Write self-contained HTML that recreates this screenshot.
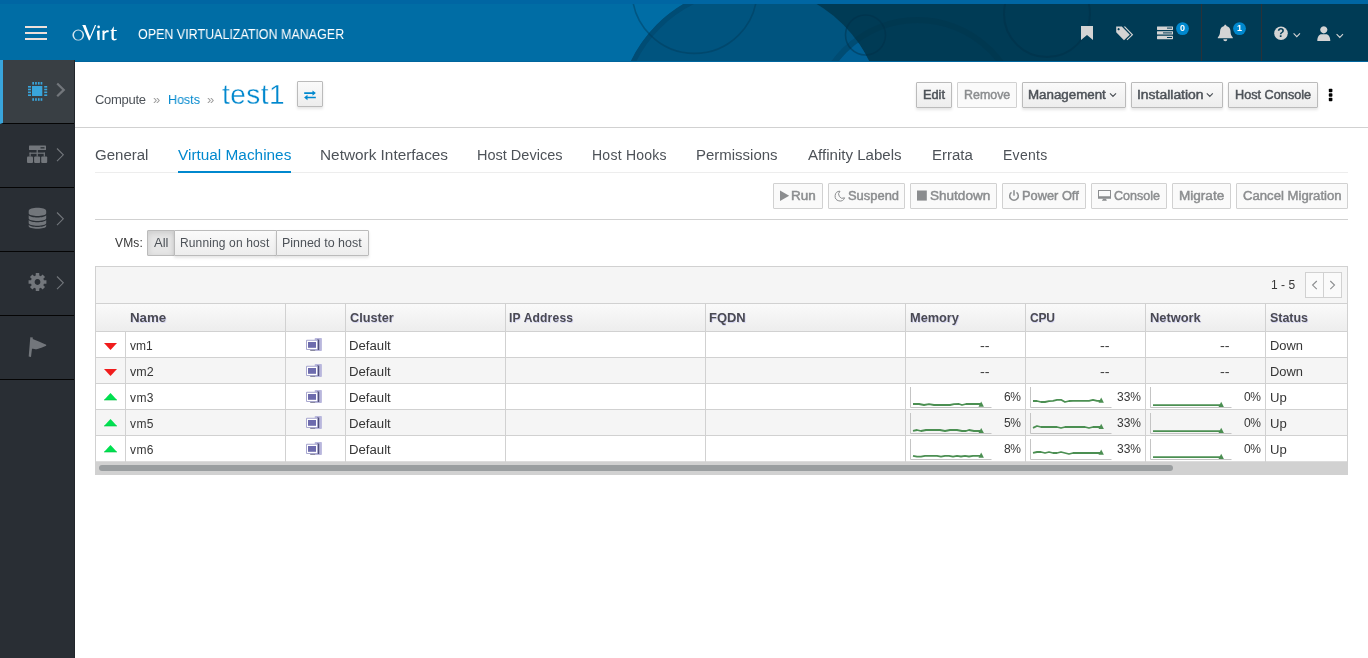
<!DOCTYPE html>
<html><head><meta charset="utf-8"><title>oVirt Open Virtualization Manager</title>
<style>
*{box-sizing:border-box;margin:0;padding:0}
html,body{width:1368px;height:658px;overflow:hidden;background:#fff;font-family:"Liberation Sans",sans-serif;font-size:12px;color:#363636}
.abs{position:absolute}
#hdr{position:absolute;left:0;top:0;width:1368px;height:62px;background:#006da5;overflow:hidden}
#hdr .top{position:absolute;left:0;top:0;width:1368px;height:4px;background:#0066a3}
#side{position:absolute;left:0;top:60px;width:75px;height:598px;background:#292e34;border-right:1px solid #22262b}
.sitem{position:absolute;left:0;width:74px;height:64px;border-bottom:1px solid #050505}
.sitem.act{background:#393f44;border-left:3px solid #39a5dc}
.t{position:absolute;white-space:nowrap;line-height:1;will-change:transform}
.btn{position:absolute;height:26px;border:1px solid #bbb;border-radius:1px;background:linear-gradient(#fafafa,#ededed);box-shadow:0 2px 3px rgba(3,3,3,.1)}
.btn.dis{background:#fafafa;border-color:#d1d1d1;box-shadow:none}
.ln{position:absolute;background:#d1d1d1}
</style></head><body>
<div id="hdr"><div class="top"></div>
<svg class="abs" style="left:0;top:0" width="1368" height="62" viewBox="0 0 1368 62">
<defs><clipPath id="hc"><rect x="0" y="4" width="1368" height="57.5"/></clipPath>
<clipPath id="d1"><circle cx="750" cy="118" r="132"/></clipPath>
<clipPath id="lh"><rect x="600" y="0" width="150" height="62"/></clipPath></defs>
<g clip-path="url(#hc)">
<rect x="750" y="0" width="618" height="62" fill="#003b55"/>
<circle cx="750" cy="118" r="132" fill="#00547f"/>
<g clip-path="url(#lh)"><circle cx="750" cy="118" r="129.5" fill="none" stroke="#004c74" stroke-width="5"/></g>
<g clip-path="url(#d1)"><circle cx="917.5" cy="123" r="106" fill="#005f94"/></g>
<circle cx="917.5" cy="123" r="103" fill="none" stroke="#00354c" stroke-opacity=".45" stroke-width="6"/>
<circle cx="694.5" cy="-9" r="62.4" fill="none" stroke="#003a58" stroke-opacity=".45" stroke-width="1.6"/>
<circle cx="865.5" cy="35" r="20" fill="none" stroke="#002f46" stroke-opacity=".45" stroke-width="1.6"/>
<circle cx="1047" cy="14" r="43" fill="none" stroke="#00324a" stroke-opacity=".6" stroke-width="2"/>
</g>
<rect x="0" y="61" width="1368" height="1" fill="#00659d"/>
</svg>
<div class="abs" style="left:25px;top:26px;width:22px;height:2px;background:#ede0da"></div>
<div class="abs" style="left:25px;top:32px;width:22px;height:2px;background:#ede0da"></div>
<div class="abs" style="left:25px;top:38px;width:22px;height:2px;background:#ede0da"></div>
<svg class="abs" style="left:70px;top:20px" width="50" height="24" viewBox="70 20 50 24">
<path fill="#d3e5ef" fill-rule="evenodd" d="M72.400 35.100a5.850 5.500 0 1 0 11.700 0a5.850 5.500 0 1 0-11.700 0zM74 35.100a4.250 4.700 0 1 0 8.500 0a4.250 4.700 0 1 0-8.500 0z"/>
<g fill="#fff">
<path d="M81.800 25.100h3.700l4.500 11.700 4.900-11.700h1.300l-6.500 15.200h-.9l-6.200-14.700z"/>
<circle cx="98.600" cy="26.900" r="1.300"/>
<path d="M96.900 31l2.700-.7v9.800h-2z"/>
<path d="M101.800 31l2.700-.7v1.800c.9-1.400 2.400-2.100 4.200-1.700v1.900c-1.700-.4-3.200.2-4.200 1.800v6h-2v-8.700z"/>
<path d="M111.500 29.900l2.300-3.600v3.600h3v1.200h-3v6.600c0 1.300 1.300 1.700 2.800.9v1.100c-2.500 1.600-5.100.7-5.100-1.700v-6.900h-1.100v-.6z"/>
</g>
</svg>
<div class="t" style="left:137.74px;top:27.00px;font-size:14px;color:#fff;transform:scaleX(0.8913);transform-origin:0 0;">OPEN VIRTUALIZATION MANAGER</div>
<svg class="abs" style="left:1070px;top:14px" width="290" height="40" viewBox="1070 14 290 40">
<g fill="#d4d4d4">
<path d="M1081 26h12v14l-6-5-6 5z"/>
<path d="M1116.200 26.500h5.600l8 8.200-5.800 5.600-7.800-8zM1118.600 28.100a1.100 1.100 0 1 0 .01 0z" fill-rule="evenodd"/>
<path d="M1123.600 26.500h1.600l8 8.200-5.800 5.600-.8-.8 5-4.800z"/>
<rect x="1157" y="26.400" width="16" height="3.600" rx=".4"/><rect x="1157" y="31.200" width="16" height="3.400" rx=".4"/><rect x="1157" y="35.800" width="16" height="3.400" rx=".4"/>
</g>
<g fill="#003b55"><rect x="1167" y="27.600" width="5" height="1"/><rect x="1163" y="32.400" width="9" height="1"/><rect x="1167" y="37" width="5" height="1"/></g>
<circle cx="1182.500" cy="28.600" r="6.400" fill="#0088ce"/>
<circle cx="1239.500" cy="28.600" r="6.400" fill="#0088ce"/>
<path fill="#d4d4d4" d="M1225.300 24.800c.7 0 1.100.5 1.100 1.100 2.600.5 4.100 2.700 4.100 5.200 0 3.600 1 5.200 2.300 6.300v.9h-15v-.9c1.300-1.100 2.300-2.700 2.300-6.300 0-2.500 1.500-4.700 4.100-5.200 0-.6.400-1.100 1.100-1.100zM1223.300 39.200h4a2 2 0 0 1-4 0z"/>
<circle cx="1281" cy="33.200" r="6.800" fill="#d4d4d4"/>
<path fill="#d4d4d4" d="M1323.800 26.200a3.600 3.600 0 1 1-.01 0zM1317.300 41c0-4.600 2-6.800 4.200-6.800h4.600c2.200 0 4.200 2.200 4.200 6.800z"/>
<path d="M1293.600 33.400l3.200 3.200 3.200-3.200M1336.600 34.200l3.200 3.200 3.200-3.200" fill="none" stroke="#d4d4d4" stroke-width="1.100"/>
</svg>
<div class="t" style="left:1179px;top:24px;width:7px;text-align:center;font-size:9px;font-weight:bold;color:#fff">0</div>
<div class="t" style="left:1236px;top:24px;width:7px;text-align:center;font-size:9px;font-weight:bold;color:#fff">1</div>
<div class="t" style="left:1277px;top:27px;width:8px;text-align:center;font-size:12px;font-weight:bold;color:#003b55">?</div>
<div class="abs" style="left:1201px;top:4px;width:1px;height:57px;background:#2a3138"></div><div class="abs" style="left:1261px;top:4px;width:1px;height:57px;background:#2a3138"></div>
</div>
<div id="side">
<div class="sitem act" style="top:0px"></div>
<div class="sitem" style="top:64px"></div>
<div class="sitem" style="top:128px"></div>
<div class="sitem" style="top:192px"></div>
<div class="sitem" style="top:256px"></div>
<svg class="abs" style="left:0;top:0" width="75" height="330" viewBox="0 60 75 330">
<g fill="#39a5dc">
<rect x="32" y="86" width="10.300" height="10"/>
<rect x="32.3" y="82" width="1.700" height="2.600"/><rect x="32.3" y="98.200" width="1.700" height="2.600"/><rect x="35.1" y="82" width="1.700" height="2.600"/><rect x="35.1" y="98.200" width="1.700" height="2.600"/><rect x="37.9" y="82" width="1.700" height="2.600"/><rect x="37.9" y="98.200" width="1.700" height="2.600"/><rect x="40.6" y="82" width="1.700" height="2.600"/><rect x="40.6" y="98.200" width="1.700" height="2.600"/><rect x="28" y="86" width="3" height="1.600"/><rect x="44.200" y="86" width="3" height="1.600"/><rect x="28" y="88.7" width="3" height="1.600"/><rect x="44.200" y="88.7" width="3" height="1.600"/><rect x="28" y="91.5" width="3" height="1.600"/><rect x="44.200" y="91.5" width="3" height="1.600"/><rect x="28" y="94.4" width="3" height="1.600"/><rect x="44.200" y="94.4" width="3" height="1.600"/>
</g>
<path d="M57.200 83.500l6.600 6.400-6.600 6.400" fill="none" stroke="#72767b" stroke-width="2.200"/>
<g fill="none" stroke="#72767b" stroke-width="1.100"><path d="M57 148.500l6.300 6.300-6.300 6.300"/><path d="M57 212.500l6.300 6.300-6.300 6.300"/><path d="M57 276.500l6.300 6.300-6.300 6.300"/></g>
<g fill="#72767b">
<rect x="29" y="145.600" width="17" height="4.400" rx=".6"/>
<rect x="27" y="156.600" width="6" height="6.400" rx="1"/><rect x="34.100" y="156.600" width="6" height="6.400" rx="1"/><rect x="41.200" y="156.600" width="6" height="6.400" rx="1"/>
<rect x="36.600" y="150" width="1.200" height="6.600"/><rect x="29.500" y="152.600" width="15.400" height="1.200"/><rect x="29.500" y="152.600" width="1.200" height="4"/><rect x="43.700" y="152.600" width="1.200" height="4"/>
</g>
<rect x="40.500" y="147.200" width="4" height="1.300" fill="#292e34"/>
<g fill="#72767b">
<path d="M28.700 211c0-4.300 17.500-4.300 17.500 0v2.200c0 3.600-17.500 3.600-17.500 0z"/>
<path d="M28.700 215.200c2 3 15.500 3 17.500 0v3c0 3.600-17.500 3.600-17.500 0z"/>
<path d="M28.700 220c2 3 15.500 3 17.500 0v3c0 3.600-17.500 3.600-17.500 0z"/>
<path d="M28.700 224.800c2 3 15.500 3 17.500 0v1.200c0 3.600-17.500 3.600-17.500 0z"/>
</g>
<path fill="#72767b" fill-rule="evenodd" d="M35.71 275.54L35.78 273.06L39.22 273.06L39.29 275.54L40.80 276.17L42.60 274.47L45.03 276.90L43.33 278.70L43.96 280.21L46.44 280.28L46.44 283.72L43.96 283.79L43.33 285.30L45.03 287.10L42.60 289.53L40.80 287.83L39.29 288.46L39.22 290.94L35.78 290.94L35.71 288.46L34.20 287.83L32.40 289.53L29.97 287.10L31.67 285.30L31.04 283.79L28.56 283.72L28.56 280.28L31.04 280.21L31.67 278.70L29.97 276.90L32.40 274.47L34.20 276.17zM37.5 279.1a2.9 2.9 0 1 0 .01 0z"/>
<path fill="#72767b" d="M30.300 337.200l2.600.3-.2 1.600c4.500 1.800 9 3.600 13.500 5.700v.9c-3.200 1.300-6.400 2.700-9.600 3.600-1.400.1-2.800-.5-4.600-.6l-1 8.200-2.300-.3z"/>
</svg>
</div>
<div class="t" style="left:94.78px;top:93.00px;font-size:13px;color:#4d5258;letter-spacing:-0.287px;">Compute</div>
<div class="t" style="left:152.52px;top:93.00px;font-size:13px;color:#9c9c9c;transform:scaleX(0.9600);transform-origin:0 0;">»</div>
<div class="t" style="left:167.54px;top:93.00px;font-size:13px;color:#0088ce;transform:scaleX(0.9631);transform-origin:0 0;">Hosts</div>
<div class="t" style="left:206.52px;top:93.00px;font-size:13px;color:#9c9c9c;transform:scaleX(0.9600);transform-origin:0 0;">»</div>
<div class="t" style="left:222.03px;top:80.50px;font-size:28px;color:#0088ce;letter-spacing:0.475px;-webkit-text-stroke:.35px #fff;">test1</div>
<div class="btn" style="left:297px;top:81px;width:26px"></div>
<svg class="abs" style="left:303px;top:89px" width="14" height="12" viewBox="303 89 14 12"><g fill="#0088ce"><path d="M304.200 92.300h8.300v-1.900l3.400 2.700-3.400 2.700v-1.900h-8.300z"/><path d="M315.800 96.700h-8.300v-1.900l-3.400 2.700 3.400 2.700v-1.900h8.300z"/></g></svg>
<div class="ln" style="left:75px;top:127px;width:1293px;height:1px"></div>
<div class="btn" style="left:916px;top:82px;width:36px"></div>
<div class="t" style="left:922.57px;top:89.00px;font-size:12px;color:#4d5258;transform:scaleX(1.0633);transform-origin:0 0;-webkit-text-stroke:.45px #4d5258;">Edit</div>
<div class="btn dis" style="left:957px;top:82px;width:60px"></div>
<div class="t" style="left:963.79px;top:89.00px;font-size:12px;color:#8b8d8f;transform:scaleX(1.0352);transform-origin:0 0;-webkit-text-stroke:.45px #8b8d8f;">Remove</div>
<div class="btn" style="left:1022px;top:82px;width:104px"></div>
<div class="t" style="left:1028.43px;top:89.00px;font-size:12px;color:#4d5258;transform:scaleX(1.1110);transform-origin:0 0;-webkit-text-stroke:.45px #4d5258;">Management</div>
<div class="btn" style="left:1131px;top:82px;width:92px"></div>
<div class="t" style="left:1137.34px;top:89.00px;font-size:12px;color:#4d5258;transform:scaleX(1.1605);transform-origin:0 0;-webkit-text-stroke:.45px #4d5258;">Installation</div>
<div class="btn" style="left:1228px;top:82px;width:90px"></div>
<div class="t" style="left:1234.77px;top:89.00px;font-size:12px;color:#4d5258;transform:scaleX(1.0572);transform-origin:0 0;-webkit-text-stroke:.45px #4d5258;">Host Console</div>
<svg class="abs" style="left:1108px;top:90px" width="110" height="10" viewBox="1108 90 110 10"><path d="M1110 93.400l3 3 3-3M1206.800 93.400l3 3 3-3" fill="none" stroke="#4d5258" stroke-width="1.200"/></svg>
<svg class="abs" style="left:1327px;top:87px" width="8" height="16" viewBox="1327 87 8 16"><g fill="#030303"><rect x="1328.800" y="88.800" width="3.600" height="3.400" rx=".8"/><rect x="1328.800" y="93.300" width="3.600" height="3.400" rx=".8"/><rect x="1328.800" y="97.800" width="3.600" height="3.400" rx=".8"/></g></svg>
<div class="t" style="left:94.73px;top:148.00px;font-size:14px;color:#4d5258;transform:scaleX(1.0729);transform-origin:0 0;">General</div>
<div class="t" style="left:177.90px;top:148.00px;font-size:14px;color:#0088ce;transform:scaleX(1.0978);transform-origin:0 0;">Virtual Machines</div>
<div class="t" style="left:320.07px;top:148.00px;font-size:14px;color:#4d5258;transform:scaleX(1.0971);transform-origin:0 0;">Network Interfaces</div>
<div class="t" style="left:477.23px;top:148.00px;font-size:14px;color:#4d5258;transform:scaleX(1.0362);transform-origin:0 0;">Host Devices</div>
<div class="t" style="left:592.27px;top:148.00px;font-size:14px;color:#4d5258;letter-spacing:0.250px;">Host Hooks</div>
<div class="t" style="left:696.30px;top:148.00px;font-size:14px;color:#4d5258;transform:scaleX(1.0693);transform-origin:0 0;">Permissions</div>
<div class="t" style="left:808.40px;top:148.00px;font-size:14px;color:#4d5258;transform:scaleX(1.0767);transform-origin:0 0;">Affinity Labels</div>
<div class="t" style="left:931.59px;top:148.00px;font-size:14px;color:#4d5258;transform:scaleX(1.0721);transform-origin:0 0;">Errata</div>
<div class="t" style="left:1002.58px;top:148.00px;font-size:14px;color:#4d5258;letter-spacing:0.275px;">Events</div>
<div class="ln" style="left:95px;top:172px;width:1253px;height:1px;background:#ededed"></div>
<div class="abs" style="left:178px;top:171px;width:113px;height:2px;background:#0088ce"></div>
<div class="btn dis" style="left:773px;top:183px;width:50px"></div>
<div class="t" style="left:791.42px;top:190.00px;font-size:12px;color:#8b8d8f;transform:scaleX(1.1220);transform-origin:0 0;-webkit-text-stroke:.45px #8b8d8f;">Run</div>
<div class="btn dis" style="left:828px;top:183px;width:77px"></div>
<div class="t" style="left:847.76px;top:190.00px;font-size:12px;color:#8b8d8f;transform:scaleX(1.0768);transform-origin:0 0;-webkit-text-stroke:.45px #8b8d8f;">Suspend</div>
<div class="btn dis" style="left:910px;top:183px;width:87px"></div>
<div class="t" style="left:929.54px;top:190.00px;font-size:12px;color:#8b8d8f;transform:scaleX(1.1292);transform-origin:0 0;-webkit-text-stroke:.45px #8b8d8f;">Shutdown</div>
<div class="btn dis" style="left:1002px;top:183px;width:84px"></div>
<div class="t" style="left:1021.77px;top:190.00px;font-size:12px;color:#8b8d8f;transform:scaleX(1.0679);transform-origin:0 0;-webkit-text-stroke:.45px #8b8d8f;">Power Off</div>
<div class="btn dis" style="left:1091px;top:183px;width:76px"></div>
<div class="t" style="left:1114.08px;top:190.00px;font-size:12px;color:#8b8d8f;transform:scaleX(1.0435);transform-origin:0 0;-webkit-text-stroke:.45px #8b8d8f;">Console</div>
<div class="btn dis" style="left:1172px;top:183px;width:59px"></div>
<div class="t" style="left:1178.61px;top:190.00px;font-size:12px;color:#8b8d8f;transform:scaleX(1.1303);transform-origin:0 0;-webkit-text-stroke:.45px #8b8d8f;">Migrate</div>
<div class="btn dis" style="left:1236px;top:183px;width:112px"></div>
<div class="t" style="left:1242.65px;top:190.00px;font-size:12px;color:#8b8d8f;transform:scaleX(1.0948);transform-origin:0 0;-webkit-text-stroke:.45px #8b8d8f;">Cancel Migration</div>
<svg class="abs" style="left:778px;top:188px" width="336" height="16" viewBox="778 188 336 16">
<path d="M780 190.500l9.200 5.300-9.200 5.300z" fill="#8b8d8f"/>
<path d="M840 191.200A4.900 4.900 0 1 0 844.600 197.800A4.050 4.050 0 0 1 840 191.200z" fill="none" stroke="#8b8d8f" stroke-width="1" stroke-linejoin="round"/>
<rect x="917" y="190.500" width="9.800" height="10.100" fill="#8b8d8f"/>
<path d="M1016.470 192.480A4.300 4.300 0 1 1 1011.530 192.480" fill="none" stroke="#8b8d8f" stroke-width="1.500"/><rect x="1013.250" y="190.200" width="1.500" height="5.500" fill="#8b8d8f"/>
<path d="M1098 190h13v8.800h-13zM1099 191.100v5.100h11v-5.100z" fill="#8b8d8f" fill-rule="evenodd"/><path d="M1102.700 198.800h3.600v1.200h.4v.8h-4.600v-.8h.6z" fill="#8b8d8f"/>
</svg>
<div class="ln" style="left:95px;top:219px;width:1253px;height:1px"></div>
<div class="t" style="left:114.90px;top:237.00px;font-size:12px;color:#363636;letter-spacing:0.183px;">VMs:</div>
<div class="btn" style="left:147px;top:230px;width:28px;background:#e6e6e6;box-shadow:inset 0 2px 6px rgba(3,3,3,.12)"></div>
<div class="btn" style="left:174px;top:230px;width:103px"></div>
<div class="btn" style="left:276px;top:230px;width:93px"></div>
<div class="t" style="left:154.10px;top:237.00px;font-size:12px;color:#4d5258;transform:scaleX(1.0880);transform-origin:0 0;">All</div>
<div class="t" style="left:180.43px;top:237.00px;font-size:12px;color:#4d5258;letter-spacing:0.136px;">Running on host</div>
<div class="t" style="left:282.39px;top:237.00px;font-size:12px;color:#4d5258;transform:scaleX(1.0376);transform-origin:0 0;">Pinned to host</div>
<div class="abs" style="left:95px;top:266px;width:1253px;height:209px;border:1px solid #d1d1d1;background:#f5f5f5"></div>
<div class="abs" style="left:96px;top:304px;width:1251px;height:27px;background:linear-gradient(#fafafa,#ededed)"></div>
<div class="ln" style="left:96px;top:303px;width:1251px;height:1px"></div>
<div class="abs" style="left:96px;top:332px;width:1251px;height:26px;background:#fff;border-bottom:1px solid #d1d1d1"></div>
<div class="abs" style="left:96px;top:358px;width:1251px;height:26px;background:#f5f5f5;border-bottom:1px solid #d1d1d1"></div>
<div class="abs" style="left:96px;top:384px;width:1251px;height:26px;background:#fff;border-bottom:1px solid #d1d1d1"></div>
<div class="abs" style="left:96px;top:410px;width:1251px;height:26px;background:#f5f5f5;border-bottom:1px solid #d1d1d1"></div>
<div class="abs" style="left:96px;top:436px;width:1251px;height:26px;background:#fff;border-bottom:1px solid #dcdcdc"></div>
<div class="ln" style="left:96px;top:331px;width:1251px;height:1px"></div>
<div class="ln" style="left:285px;top:304px;width:1px;height:158px"></div>
<div class="ln" style="left:345px;top:304px;width:1px;height:158px"></div>
<div class="ln" style="left:505px;top:304px;width:1px;height:158px"></div>
<div class="ln" style="left:705px;top:304px;width:1px;height:158px"></div>
<div class="ln" style="left:905px;top:304px;width:1px;height:158px"></div>
<div class="ln" style="left:1025px;top:304px;width:1px;height:158px"></div>
<div class="ln" style="left:1145px;top:304px;width:1px;height:158px"></div>
<div class="ln" style="left:1265px;top:304px;width:1px;height:158px"></div>
<div class="ln" style="left:125px;top:332px;width:1px;height:130px"></div>
<div class="abs" style="left:96px;top:462px;width:1251px;height:12px;background:#d1d1d1"></div>
<div class="abs" style="left:99px;top:465px;width:1074px;height:6px;border-radius:3px;background:#9a9ea0"></div>
<div class="t" style="left:1270.83px;top:279.00px;font-size:12px;color:#363636;letter-spacing:0.037px;">1 - 5</div>
<div class="abs" style="left:1305px;top:272px;width:37px;height:26px;border:1px solid #d1d1d1;background:#fafafa"></div><div class="ln" style="left:1323px;top:273px;width:1px;height:24px"></div>
<svg class="abs" style="left:1308px;top:278px" width="32" height="14" viewBox="1308 278 32 14"><path d="M1316.800 281l-4.200 4.100 4.200 4.100M1330.300 281l4.200 4.100-4.200 4.100" fill="none" stroke="#8b8d8f" stroke-width="1.100"/></svg>
<div class="t" style="left:129.77px;top:312.00px;font-size:12px;color:#4a4a52;transform:scaleX(1.1067);transform-origin:0 0;font-weight:bold;text-shadow:.6px .6px 0 #d4d4f2;">Name</div>
<div class="t" style="left:349.60px;top:312.00px;font-size:12px;color:#4a4a52;transform:scaleX(1.0552);transform-origin:0 0;font-weight:bold;text-shadow:.6px .6px 0 #d4d4f2;">Cluster</div>
<div class="t" style="left:509.25px;top:312.00px;font-size:12px;color:#4a4a52;letter-spacing:0.214px;font-weight:bold;text-shadow:.6px .6px 0 #d4d4f2;">IP Address</div>
<div class="t" style="left:709.49px;top:312.00px;font-size:12px;color:#4a4a52;transform:scaleX(1.0769);transform-origin:0 0;font-weight:bold;text-shadow:.6px .6px 0 #d4d4f2;">FQDN</div>
<div class="t" style="left:909.70px;top:312.00px;font-size:12px;color:#4a4a52;transform:scaleX(1.0630);transform-origin:0 0;font-weight:bold;text-shadow:.6px .6px 0 #d4d4f2;">Memory</div>
<div class="t" style="left:1030.33px;top:312.00px;font-size:12px;color:#4a4a52;letter-spacing:-0.225px;font-weight:bold;text-shadow:.6px .6px 0 #d4d4f2;">CPU</div>
<div class="t" style="left:1149.70px;top:312.00px;font-size:12px;color:#4a4a52;transform:scaleX(1.0724);transform-origin:0 0;font-weight:bold;text-shadow:.6px .6px 0 #d4d4f2;">Network</div>
<div class="t" style="left:1270.04px;top:312.00px;font-size:12px;color:#4a4a52;transform:scaleX(1.0361);transform-origin:0 0;font-weight:bold;text-shadow:.6px .6px 0 #d4d4f2;">Status</div>
<div class="t" style="left:130.10px;top:340.00px;font-size:12px;color:#363636;letter-spacing:-0.013px;">vm1</div>
<div class="t" style="left:349.04px;top:340.00px;font-size:12px;color:#363636;transform:scaleX(1.0990);transform-origin:0 0;">Default</div>
<svg class="abs" style="left:103px;top:342px" width="16" height="9" viewBox="0 0 16 9"><path d="M1 1.100h13l-6.500 6.900z" fill="#f01c1c"/></svg>
<div class="t" style="left:1269.76px;top:340.00px;font-size:12px;color:#363636;transform:scaleX(1.0747);transform-origin:0 0;">Down</div>
<div class="t" style="left:980.00px;top:340.00px;font-size:12px;color:#363636;transform:scaleX(1.2000);transform-origin:0 0;">--</div>
<div class="t" style="left:1100.00px;top:340.00px;font-size:12px;color:#363636;transform:scaleX(1.2000);transform-origin:0 0;">--</div>
<div class="t" style="left:1220.00px;top:340.00px;font-size:12px;color:#363636;transform:scaleX(1.2000);transform-origin:0 0;">--</div>
<svg class="abs" style="left:305px;top:337px" width="18" height="15" viewBox="305 337 18 15"><rect x="314.700" y="338" width="7.200" height="13" rx=".8" fill="#b9b7dd"/><rect x="317" y="339.500" width="2.200" height="10.500" fill="#50507a"/><rect x="306" y="339.800" width="12" height="10.200" rx="1" fill="#a9a8d0"/><rect x="307" y="340.800" width="10" height="8.200" fill="#fff"/><rect x="308" y="342" width="8" height="5.800" fill="#6d6bad"/><rect x="310.200" y="350" width="5" height="1" fill="#8a8aa0"/></svg>
<div class="t" style="left:130.10px;top:366.00px;font-size:12px;color:#363636;transform:scaleX(1.0395);transform-origin:0 0;">vm2</div>
<div class="t" style="left:349.04px;top:366.00px;font-size:12px;color:#363636;transform:scaleX(1.0990);transform-origin:0 0;">Default</div>
<svg class="abs" style="left:103px;top:368px" width="16" height="9" viewBox="0 0 16 9"><path d="M1 1.100h13l-6.500 6.900z" fill="#f01c1c"/></svg>
<div class="t" style="left:1269.76px;top:366.00px;font-size:12px;color:#363636;transform:scaleX(1.0747);transform-origin:0 0;">Down</div>
<div class="t" style="left:980.00px;top:366.00px;font-size:12px;color:#363636;transform:scaleX(1.2000);transform-origin:0 0;">--</div>
<div class="t" style="left:1100.00px;top:366.00px;font-size:12px;color:#363636;transform:scaleX(1.2000);transform-origin:0 0;">--</div>
<div class="t" style="left:1220.00px;top:366.00px;font-size:12px;color:#363636;transform:scaleX(1.2000);transform-origin:0 0;">--</div>
<svg class="abs" style="left:305px;top:363px" width="18" height="15" viewBox="305 337 18 15"><rect x="314.700" y="338" width="7.200" height="13" rx=".8" fill="#b9b7dd"/><rect x="317" y="339.500" width="2.200" height="10.500" fill="#50507a"/><rect x="306" y="339.800" width="12" height="10.200" rx="1" fill="#a9a8d0"/><rect x="307" y="340.800" width="10" height="8.200" fill="#fff"/><rect x="308" y="342" width="8" height="5.800" fill="#6d6bad"/><rect x="310.200" y="350" width="5" height="1" fill="#8a8aa0"/></svg>
<div class="t" style="left:130.10px;top:392.00px;font-size:12px;color:#363636;letter-spacing:0.375px;">vm3</div>
<div class="t" style="left:349.04px;top:392.00px;font-size:12px;color:#363636;transform:scaleX(1.0990);transform-origin:0 0;">Default</div>
<svg class="abs" style="left:103px;top:392px" width="16" height="9" viewBox="0 0 16 9"><path d="M1 8l6.500-7 6.500 7z" fill="#00e050"/><path d="M1 8h13" stroke="#00c040" stroke-width=".6"/></svg>
<div class="t" style="left:1269.74px;top:392.00px;font-size:12px;color:#363636;transform:scaleX(1.0929);transform-origin:0 0;">Up</div>
<svg class="abs" style="left:305px;top:389px" width="18" height="15" viewBox="305 337 18 15"><rect x="314.700" y="338" width="7.200" height="13" rx=".8" fill="#b9b7dd"/><rect x="317" y="339.500" width="2.200" height="10.500" fill="#50507a"/><rect x="306" y="339.800" width="12" height="10.200" rx="1" fill="#a9a8d0"/><rect x="307" y="340.800" width="10" height="8.200" fill="#fff"/><rect x="308" y="342" width="8" height="5.800" fill="#6d6bad"/><rect x="310.200" y="350" width="5" height="1" fill="#8a8aa0"/></svg>
<div class="t" style="left:130.10px;top:418.00px;font-size:12px;color:#363636;letter-spacing:0.375px;">vm5</div>
<div class="t" style="left:349.04px;top:418.00px;font-size:12px;color:#363636;transform:scaleX(1.0990);transform-origin:0 0;">Default</div>
<svg class="abs" style="left:103px;top:418px" width="16" height="9" viewBox="0 0 16 9"><path d="M1 8l6.500-7 6.500 7z" fill="#00e050"/><path d="M1 8h13" stroke="#00c040" stroke-width=".6"/></svg>
<div class="t" style="left:1269.74px;top:418.00px;font-size:12px;color:#363636;transform:scaleX(1.0929);transform-origin:0 0;">Up</div>
<svg class="abs" style="left:305px;top:415px" width="18" height="15" viewBox="305 337 18 15"><rect x="314.700" y="338" width="7.200" height="13" rx=".8" fill="#b9b7dd"/><rect x="317" y="339.500" width="2.200" height="10.500" fill="#50507a"/><rect x="306" y="339.800" width="12" height="10.200" rx="1" fill="#a9a8d0"/><rect x="307" y="340.800" width="10" height="8.200" fill="#fff"/><rect x="308" y="342" width="8" height="5.800" fill="#6d6bad"/><rect x="310.200" y="350" width="5" height="1" fill="#8a8aa0"/></svg>
<div class="t" style="left:130.10px;top:444.00px;font-size:12px;color:#363636;letter-spacing:0.375px;">vm6</div>
<div class="t" style="left:349.04px;top:444.00px;font-size:12px;color:#363636;transform:scaleX(1.0990);transform-origin:0 0;">Default</div>
<svg class="abs" style="left:103px;top:444px" width="16" height="9" viewBox="0 0 16 9"><path d="M1 8l6.500-7 6.500 7z" fill="#00e050"/><path d="M1 8h13" stroke="#00c040" stroke-width=".6"/></svg>
<div class="t" style="left:1269.74px;top:444.00px;font-size:12px;color:#363636;transform:scaleX(1.0929);transform-origin:0 0;">Up</div>
<svg class="abs" style="left:305px;top:441px" width="18" height="15" viewBox="305 337 18 15"><rect x="314.700" y="338" width="7.200" height="13" rx=".8" fill="#b9b7dd"/><rect x="317" y="339.500" width="2.200" height="10.500" fill="#50507a"/><rect x="306" y="339.800" width="12" height="10.200" rx="1" fill="#a9a8d0"/><rect x="307" y="340.800" width="10" height="8.200" fill="#fff"/><rect x="308" y="342" width="8" height="5.800" fill="#6d6bad"/><rect x="310.200" y="350" width="5" height="1" fill="#8a8aa0"/></svg>
<svg class="abs" style="left:906px;top:384px" width="90" height="26" viewBox="0 0 90 26"><path d="M4.500 3v20.500H85.500" fill="none" stroke="#c4c4c4" stroke-width="1"/><path d="M8 20L14 20L19 21L24 20.2L29 21L45 21L49 20.2L54 20L57 21L61 20L73 20L76 20" fill="none" stroke="#4b8f52" stroke-width="1.800" stroke-linejoin="round" transform="translate(-1 0)"/><path d="M75.200 17.6l2.700 5.200h-5.400z" fill="#4b8f52"/></svg>
<div class="t" style="left:1003.90px;top:391.00px;font-size:12px;color:#363636;letter-spacing:-0.375px;">6%</div>
<svg class="abs" style="left:1026px;top:384px" width="90" height="26" viewBox="0 0 90 26"><path d="M4.500 3v20.500H85.500" fill="none" stroke="#c4c4c4" stroke-width="1"/><path d="M8 17L12 17L16 18L20 18L24 17.2L28 16.8L32 15.8L36 15.8L40 18L44 17L48 16.8L64 16.8L68 15.8L72 16.8L76 17" fill="none" stroke="#4b8f52" stroke-width="1.800" stroke-linejoin="round" transform="translate(-1 0)"/><path d="M75.200 13.6l2.700 5.200h-5.400z" fill="#4b8f52"/></svg>
<div class="t" style="left:1116.83px;top:391.00px;font-size:12px;color:#363636;letter-spacing:-0.025px;">33%</div>
<svg class="abs" style="left:1146px;top:384px" width="90" height="26" viewBox="0 0 90 26"><path d="M4.500 3v20.500H85.500" fill="none" stroke="#c4c4c4" stroke-width="1"/><path d="M8 21.1L76 21.1" fill="none" stroke="#4b8f52" stroke-width="1.800" stroke-linejoin="round" transform="translate(-1 0)"/><path d="M75.200 17.8l2.700 5.200h-5.400z" fill="#4b8f52"/></svg>
<div class="t" style="left:1244.03px;top:391.00px;font-size:12px;color:#363636;letter-spacing:-0.500px;">0%</div>
<svg class="abs" style="left:906px;top:410px" width="90" height="26" viewBox="0 0 90 26"><path d="M4.500 3v20.500H85.500" fill="none" stroke="#c4c4c4" stroke-width="1"/><path d="M8 20.9L12 20L16 21L21 20L35 20L40 21L45 20L52 20L57 21L61 21L64 20L69 21L76 21" fill="none" stroke="#4b8f52" stroke-width="1.800" stroke-linejoin="round" transform="translate(-1 0)"/><path d="M75.200 17.9l2.700 5.200h-5.400z" fill="#4b8f52"/></svg>
<div class="t" style="left:1004.02px;top:417.00px;font-size:12px;color:#363636;letter-spacing:-0.500px;">5%</div>
<svg class="abs" style="left:1026px;top:410px" width="90" height="26" viewBox="0 0 90 26"><path d="M4.500 3v20.500H85.500" fill="none" stroke="#c4c4c4" stroke-width="1"/><path d="M8 17.9L12 16L16 17L32 17L36 18L40 17L60 17L64 18L68 17L76 17" fill="none" stroke="#4b8f52" stroke-width="1.800" stroke-linejoin="round" transform="translate(-1 0)"/><path d="M75.200 13.7l2.700 5.200h-5.400z" fill="#4b8f52"/></svg>
<div class="t" style="left:1116.83px;top:417.00px;font-size:12px;color:#363636;letter-spacing:-0.025px;">33%</div>
<svg class="abs" style="left:1146px;top:410px" width="90" height="26" viewBox="0 0 90 26"><path d="M4.500 3v20.500H85.500" fill="none" stroke="#c4c4c4" stroke-width="1"/><path d="M8 21.1L76 21.1" fill="none" stroke="#4b8f52" stroke-width="1.800" stroke-linejoin="round" transform="translate(-1 0)"/><path d="M75.200 17.8l2.700 5.200h-5.400z" fill="#4b8f52"/></svg>
<div class="t" style="left:1244.03px;top:417.00px;font-size:12px;color:#363636;letter-spacing:-0.500px;">0%</div>
<svg class="abs" style="left:906px;top:436px" width="90" height="26" viewBox="0 0 90 26"><path d="M4.500 3v20.500H85.500" fill="none" stroke="#c4c4c4" stroke-width="1"/><path d="M8 19.8L12 20.7L16 20.7L20 19.8L32 19.8L36 20.7L40 19.8L44 19.8L48 20.7L52 19.8L56 20.5L60 19.8L64 20.5L68 19.8L76 19.8" fill="none" stroke="#4b8f52" stroke-width="1.800" stroke-linejoin="round" transform="translate(-1 0)"/><path d="M75.200 16.6l2.700 5.200h-5.400z" fill="#4b8f52"/></svg>
<div class="t" style="left:1003.90px;top:443.00px;font-size:12px;color:#363636;letter-spacing:-0.375px;">8%</div>
<svg class="abs" style="left:1026px;top:436px" width="90" height="26" viewBox="0 0 90 26"><path d="M4.500 3v20.500H85.500" fill="none" stroke="#c4c4c4" stroke-width="1"/><path d="M8 16.8L12 16L16 16L20 17L24 16L28 17L32 17L36 16L40 17L44 18L48 17L76 17" fill="none" stroke="#4b8f52" stroke-width="1.800" stroke-linejoin="round" transform="translate(-1 0)"/><path d="M75.200 13.5l2.700 5.200h-5.400z" fill="#4b8f52"/></svg>
<div class="t" style="left:1116.83px;top:443.00px;font-size:12px;color:#363636;letter-spacing:-0.025px;">33%</div>
<svg class="abs" style="left:1146px;top:436px" width="90" height="26" viewBox="0 0 90 26"><path d="M4.500 3v20.500H85.500" fill="none" stroke="#c4c4c4" stroke-width="1"/><path d="M8 21.1L76 21.1" fill="none" stroke="#4b8f52" stroke-width="1.800" stroke-linejoin="round" transform="translate(-1 0)"/><path d="M75.200 17.8l2.700 5.200h-5.400z" fill="#4b8f52"/></svg>
<div class="t" style="left:1244.03px;top:443.00px;font-size:12px;color:#363636;letter-spacing:-0.500px;">0%</div>
</body></html>
